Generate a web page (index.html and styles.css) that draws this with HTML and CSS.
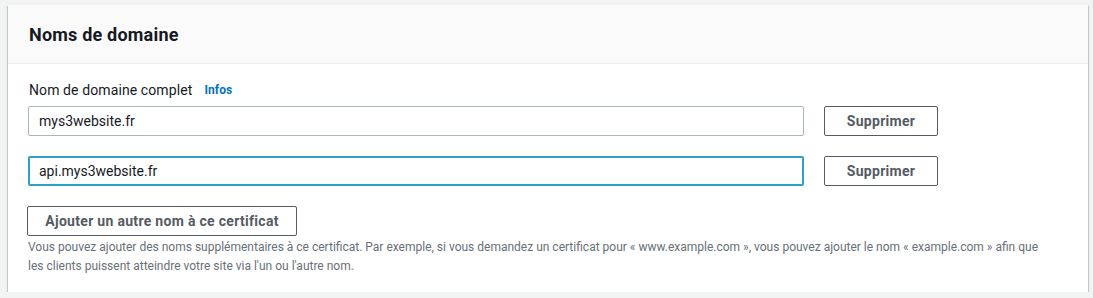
FILE: index.html
```html
<!DOCTYPE html>
<html>
  <head>
    <title>Noms de domaine</title>
    <meta name="viewport" content="width=device-width, initial-scale=1.0" />
    <link rel="stylesheet" href="styles.css">
  </head>
  <body>
    <div class="panel">
      <div class="panel-header">
        <h2>Noms de domaine</h2>
      </div>
      <div class="panel-body">
        <div class="field-label">
          <label for="domain0">Nom de domaine complet</label>
          <a class="info-link" href="#">Infos</a>
        </div>
        <div class="domain-row">
          <input type="text" id="domain0" class="domain-input" value="mys3website.fr" />
          <button type="button" class="btn">Supprimer</button>
        </div>
        <div class="domain-row">
          <input type="text" id="domain1" class="domain-input focused" value="api.mys3website.fr" />
          <button type="button" class="btn">Supprimer</button>
        </div>
        <button type="button" class="btn btn-add">Ajouter un autre nom à ce certificat</button>
        <p class="help-text">
          Vous pouvez ajouter des noms supplémentaires à ce certificat. Par exemple, si vous demandez un certificat pour « www.example.com », vous pouvez ajouter le nom « example.com » afin que les clients puissent atteindre votre site via l'un ou l'autre nom.
        </p>
      </div>
    </div>
  </body>
</html>
```

FILE: styles.css
```css
body {
  font-family: Roboto, "Noto Sans", sans-serif;
  margin: 0;
  padding: 5px 5px 0 8px;
  background-color: #f2f3f3;
  color: #16191f;
}

.panel {
  width: 1080px;
  background: white;
  box-shadow: 0 1px 1px 0 rgba(0, 28, 36, 0.3),
    1px 1px 1px 0 rgba(0, 28, 36, 0.15),
    -1px 1px 1px 0 rgba(0, 28, 36, 0.15);
}

.panel-header {
  background-color: #fafafa;
  border-bottom: 1px solid #eaeded;
  height: 58px;
  padding: 0 21px;
  display: flex;
  align-items: center;
}

.panel-header h2 {
  margin: 0;
  font-size: 18px;
  font-weight: 700;
  letter-spacing: 0.2px;
}

.panel-body {
  padding: 15px 20px 16px 20px;
}

.field-label {
  display: flex;
  align-items: center;
  gap: 12px;
  font-size: 14px;
  line-height: 22px;
  padding-left: 1px;
  margin-bottom: 5px;
  letter-spacing: 0.1px;
}

.info-link {
  color: #0073bb;
  font-size: 12px;
  font-weight: 700;
  text-decoration: none;
}

.domain-row {
  display: flex;
  align-items: center;
  gap: 20px;
  margin-bottom: 20px;
}

.domain-input {
  box-sizing: border-box;
  width: 776px;
  height: 30px;
  padding: 4px 10px;
  border: 1px solid #aab7b8;
  border-radius: 2px;
  font-family: inherit;
  font-size: 14px;
  color: #16191f;
  outline: none;
}

.domain-input.focused {
  border: 2px solid #2ea1c9;
  padding: 3px 9px;
}

.btn {
  box-sizing: border-box;
  height: 30px;
  width: 114px;
  border: 1px solid #545b64;
  border-radius: 2px;
  background: white;
  color: #545b64;
  font-family: inherit;
  font-size: 14px;
  font-weight: 700;
  letter-spacing: 0.3px;
  cursor: pointer;
}

.btn-add {
  width: 270px;
  margin-left: -1px;
}

.help-text {
  margin: 2px 0 0 0;
  font-size: 12px;
  line-height: 19px;
  color: #687078;
  padding-right: 18px;
}
```
